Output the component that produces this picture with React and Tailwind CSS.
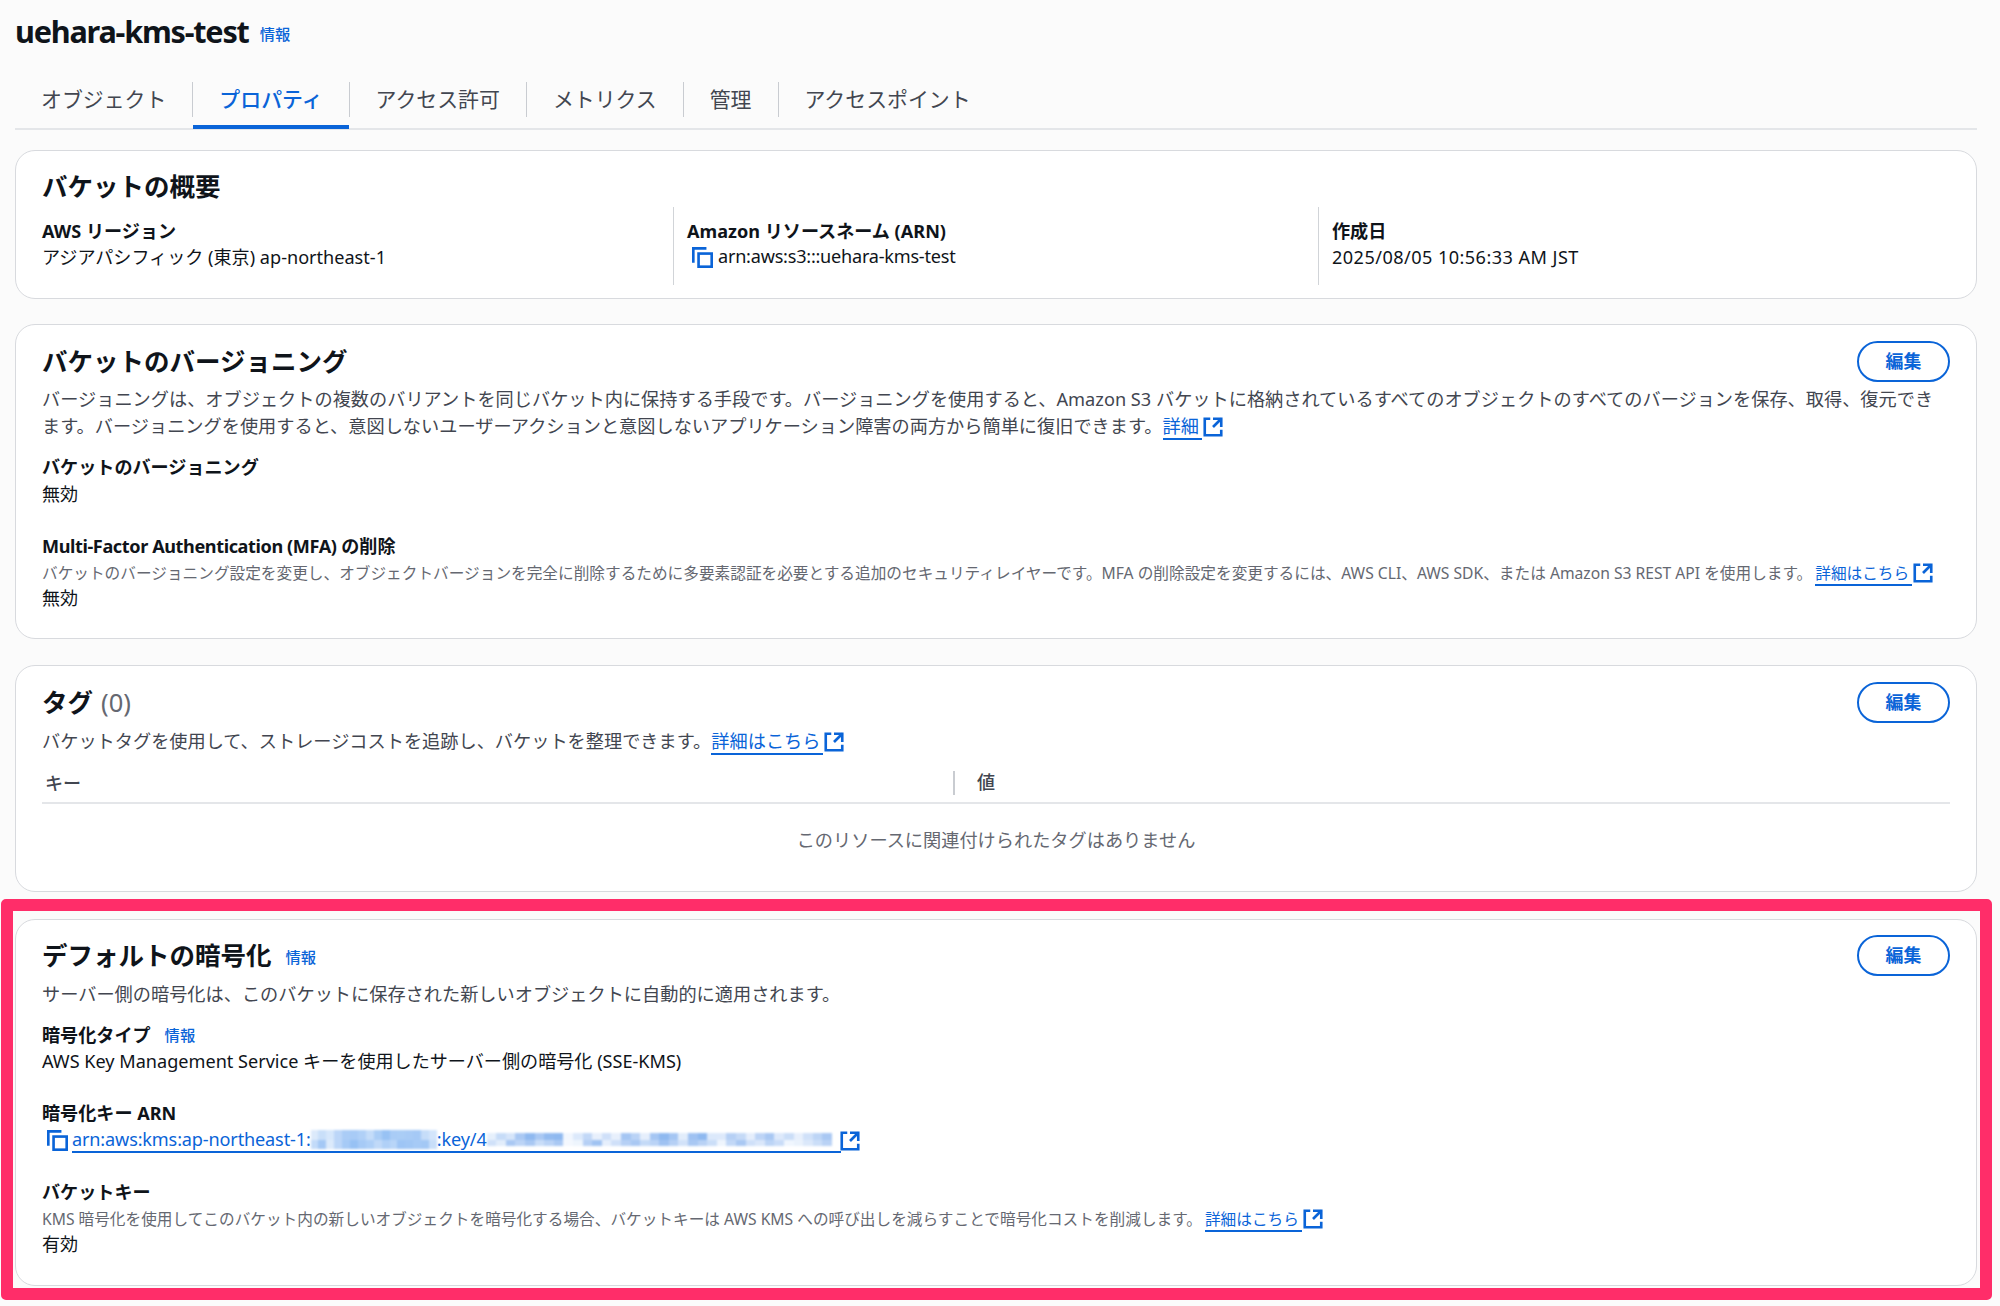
const blue = 'text-[#0a64d8]'

function ExternalIcon({ className = '' }) {
  return (
    <svg viewBox="0 0 16 16" fill="none" stroke="#0a64d8" strokeWidth="1.9" className={`inline-block w-[22px] h-[22px] align-[-5px] ${className}`}>
      <path d="M14 8V2H8" />
      <path d="M14 2 8 8" />
      <path d="M6 2H2v12h12v-4" />
    </svg>
  )
}

function CopyIcon() {
  return (
    <svg viewBox="0 0 16 16" fill="none" stroke="#0a64d8" strokeWidth="2" className="w-[21px] h-[21px] shrink-0">
      <path d="M1 12V1h10" />
      <rect x="5" y="5" width="10" height="10" />
    </svg>
  )
}

function ExtLink({ children }) {
  return (
    <a className="whitespace-nowrap">
      <span className={`${blue} border-b-2 border-[#0a64d8] pr-[3px]`}>{children}</span>
      <ExternalIcon />
    </a>
  )
}

function Card({ children, className = '' }) {
  return (
    <section className={`relative bg-white border-[1.5px] border-[#d8dade] rounded-[20px] px-[26px] ${className}`}>
      {children}
    </section>
  )
}

function EditButton() {
  return (
    <button className={`w-[93px] h-[41px] rounded-full border-[2.5px] border-[#0a64d8] ${blue} font-bold text-[17.9px] flex items-center justify-center`}>
      編集
    </button>
  )
}

function Heading({ children, action }) {
  return (
    <div className="flex items-center justify-between h-[41px]">
      <h2 className="font-bold text-[25.5px] text-[#0f141a] flex items-center">{children}</h2>
      {action && <EditButton />}
    </div>
  )
}

function Label({ children }) {
  return <div className="font-bold text-[#0f141a] h-[26px] leading-[26px]">{children}</div>
}

function Value({ children }) {
  return <div className="text-[#0f141a] h-[26px] leading-[26px]">{children}</div>
}

function Info({ className = '' }) {
  return <a className={`${blue} font-medium text-[15.3px] ${className}`}>情報</a>
}

const tabs = ['オブジェクト', 'プロパティ', 'アクセス許可', 'メトリクス', '管理', 'アクセスポイント']

// stand-ins for the redacted parts of the key ARN
const blurA = [
  ['#dceafb', '#c9dff9', '#d6e7fb', '#bcd6f8', '#aaccf6', '#a8cbf6', '#b0d0f7', '#c4dcf9', '#aacdf6', '#98c2f4', '#a9ccf6', '#aacdf6', '#a8cbf6', '#a5c9f6', '#c6ddf9', '#d3e5fb'],
  ['#c3dbf9', '#a4c8f5', '#dceafb', '#bcd6f8', '#a6caf6', '#97c1f4', '#a6caf6', '#aecff7', '#c0d9f8', '#b0d0f7', '#b8d5f8', '#9ec5f5', '#a1c7f5', '#a6caf6', '#a3c8f5', '#c8def9'],
]
const blurB = [
  ['#e6f0fc', '#c7dcf8', '#d6e5fa', '#a9c8f3', '#8fb9f0', '#a9c8f3', '#93bbf0', '#8fb9f0', '#f2f7fe', '#dce9fb', '#c2d8f7', '#e8f0fc', '#cfe0f9', '#e8f0fc', '#a5c6f3', '#bad3f6', '#e6effc', '#a5c6f3', '#8fb9f0', '#a5c6f3', '#e2edfb', '#9fc2f2', '#8fb9f0', '#dce9fb', '#dde9fb', '#b6d0f5', '#c5daf7', '#e5eefc', '#bdd4f6', '#a9c8f3', '#dde9fb', '#cbdef8', '#e8f0fc', '#d0e1f9', '#bdd5f6', '#a9c8f3'],
  ['#d0e1f9', '#e2edfb', '#a9c8f3', '#bcd4f6', '#a9c8f3', '#c9ddf8', '#bad3f6', '#a9c8f3', '#f4f8fe', '#eef5fd', '#b6d0f5', '#a0c3f2', '#e6effc', '#cfe0f9', '#b6d0f5', '#a9c8f3', '#c4daf7', '#bad3f6', '#9fc2f2', '#b6d0f5', '#d2e2f9', '#a9c8f3', '#b9d2f5', '#cbdef8', '#eff5fd', '#c2d8f7', '#a9c8f3', '#cfe0f9', '#dae7fa', '#bcd4f6', '#c9dcf8', '#f0f6fe', '#eaf2fc', '#dbe8fa', '#cbdef8', '#b9d2f5'],
]

function Mosaic({ rows, cell, height }) {
  return (
    <span className="inline-flex flex-col blur-[0.8px]">
      {rows.map((row, r) => (
        <span key={r} className="flex">
          {row.map((c, i) => (
            <span key={i} style={{ backgroundColor: c, width: cell, height }} />
          ))}
        </span>
      ))}
    </span>
  )
}

export default function App() {
  return (
    <div
      className="relative w-full min-h-[1306px] bg-[#fbfbfb] pl-[15px] pr-[23px] text-[18.1px] text-[#0f141a]"
      style={{ fontFamily: '"Noto Sans", "Noto Sans CJK JP", sans-serif' }}
    >
      <div className="flex items-center h-[64px]">
        <h1 className="font-bold text-[30.6px] tracking-[-1.2px] text-[#0f141a]">uehara-kms-test</h1>
        <Info className="ml-[11px] mt-[5px]" />
      </div>

      <nav className="flex h-[66px] pt-[18px] border-b-2 border-[#e4e6e9] text-[20.9px]">
        {tabs.map((t, i) => (
          <div key={t} className={`relative flex items-center h-[35px] px-[26px] ${i > 0 ? 'border-l border-[#c9ccd1]' : ''} ${i === 1 ? blue + ' font-medium' : 'text-[#424650]'}`}>
            {t}
            {i === 1 && <span className="absolute left-0 right-0 top-[43px] h-[4px] bg-[#0a64d8]" />}
          </div>
        ))}
      </nav>

      <div className="flex flex-col">
        <Card className="mt-[20px] h-[149px] pt-[16px]">
          <h2 className="font-bold text-[25.5px] text-[#0f141a] h-[38px] leading-[38px]">バケットの概要</h2>
          <div className="flex mt-[2px] h-[78px]">
            <div className="w-[631px] pt-[11px]">
              <Label>AWS リージョン</Label>
              <Value>アジアパシフィック (東京) ap-northeast-1</Value>
            </div>
            <div className="w-[645px] border-l border-[#d1d4d8] pl-[13px] pt-[11px]">
              <Label>Amazon リソースネーム (ARN)</Label>
              <div className="flex items-center gap-[5px] h-[26px] pl-[5px]">
                <CopyIcon />
                <span className="tracking-[-0.23px]">arn:aws:s3:::uehara-kms-test</span>
              </div>
            </div>
            <div className="flex-1 border-l border-[#d1d4d8] pl-[13px] pt-[11px]">
              <Label>作成日</Label>
              <Value><span className="tracking-[0.45px]">2025/08/05 10:56:33 AM JST</span></Value>
            </div>
          </div>
        </Card>

        <Card className="mt-[25px] h-[315px] pt-[16px]">
          <Heading action>バケットのバージョニング</Heading>
          <p className="text-[18.2px] leading-[26.5px] text-[#424650] mt-[4px]">
            バージョニングは、オブジェクトの複数のバリアントを同じバケット内に保持する手段です。バージョニングを使用すると、Amazon S3 バケットに格納されているすべてのオブジェクトのすべてのバージョンを保存、取得、復元でき<br />
            ます。バージョニングを使用すると、意図しないユーザーアクションと意図しないアプリケーション障害の両方から簡単に復旧できます。
            <ExtLink>詳細</ExtLink>
          </p>
          <div className="mt-[15px]">
            <Label>バケットのバージョニング</Label>
            <div className="mt-px"><Value>無効</Value></div>
          </div>
          <div className="mt-[26px]">
            <Label><span className="tracking-[-0.4px]">Multi-Factor Authentication (MFA)</span> の削除</Label>
            <div className="text-[15.67px] text-[#656871] h-[26px] leading-[28px] whitespace-nowrap">
              バケットのバージョニング設定を変更し、オブジェクトバージョンを完全に削除するために多要素認証を必要とする追加のセキュリティレイヤーです。MFA の削除設定を変更するには、AWS CLI、AWS SDK、または Amazon S3 REST API を使用します。<span className="ml-[3px]" /><ExtLink>詳細はこちら</ExtLink>
            </div>
            <Value>無効</Value>
          </div>
        </Card>

        <Card className="mt-[26px] h-[227px] pt-[16px]">
          <Heading action>
            タグ <span className="font-normal text-[#656871] ml-2">(0)</span>
          </Heading>
          <div className="text-[18.2px] h-[26px] leading-[26px] mt-[5px] text-[#424650]">
            バケットタグを使用して、ストレージコストを追跡し、バケットを整理できます。<ExtLink>詳細はこちら</ExtLink>
          </div>
          <div className="flex h-[48px] items-center border-b-2 border-[#e4e6e9] mt-[2px] pt-[8px] font-medium text-[#424650]">
            <div className="w-[913px] pl-[3px] h-[24px] leading-[24px] border-r-2 border-[#c9ccd1]">キー</div>
            <div className="pl-[22px]">値</div>
          </div>
          <div className="text-[18.2px] text-center text-[#656871] mt-[23px]">このリソースに関連付けられたタグはありません</div>
        </Card>

        <Card className="mt-[27px] h-[367px] pt-[15px]">
          <Heading action>
            デフォルトの暗号化
            <Info className="ml-[14px] mt-[3px]" />
          </Heading>
          <div className="text-[18.2px] h-[26px] leading-[26px] mt-[5px] text-[#424650]">サーバー側の暗号化は、このバケットに保存された新しいオブジェクトに自動的に適用されます。</div>
          <div className="mt-[15px]">
            <div className="flex items-center font-bold h-[26px] pt-px">
              暗号化タイプ
              <Info className="ml-[14px]" />
            </div>
            <Value>AWS Key Management Service キーを使用したサーバー側の暗号化 (SSE-KMS)</Value>
          </div>
          <div className="mt-[26px]">
            <Label>暗号化キー ARN</Label>
            <div className="flex items-center h-[29px] pl-[5px]">
              <CopyIcon />
              <a className={`${blue} flex items-center border-b-2 border-[#0a64d8] ml-[4px] h-[25px] whitespace-nowrap tracking-[-0.15px]`}>
                <span>arn:aws:kms:ap-northeast-1:</span>
                <Mosaic rows={blurA} cell="7.9px" height="9.5px" />
                <span>:key/4</span>
                <Mosaic rows={blurB} cell="9.6px" height="6.5px" />
                <span className="w-[9px]" />
              </a>
              <ExternalIcon className="shrink-0 -ml-[2px]" />
            </div>
          </div>
          <div className="mt-[24px]">
            <Label>バケットキー</Label>
            <div className="text-[15.67px] text-[#656871] h-[26px] leading-[28px] whitespace-nowrap">
              KMS 暗号化を使用してこのバケット内の新しいオブジェクトを暗号化する場合、バケットキーは AWS KMS への呼び出しを減らすことで暗号化コストを削減します。<span className="ml-[3px]" /><ExtLink>詳細はこちら</ExtLink>
            </div>
            <Value>有効</Value>
          </div>
        </Card>
      </div>

      {/* annotation frame drawn over the last card */}
      <div className="absolute left-px top-[899px] w-[1991px] h-[401px] border-[12px] border-[#ff2d69] rounded-[5px] pointer-events-none" />
    </div>
  )
}
